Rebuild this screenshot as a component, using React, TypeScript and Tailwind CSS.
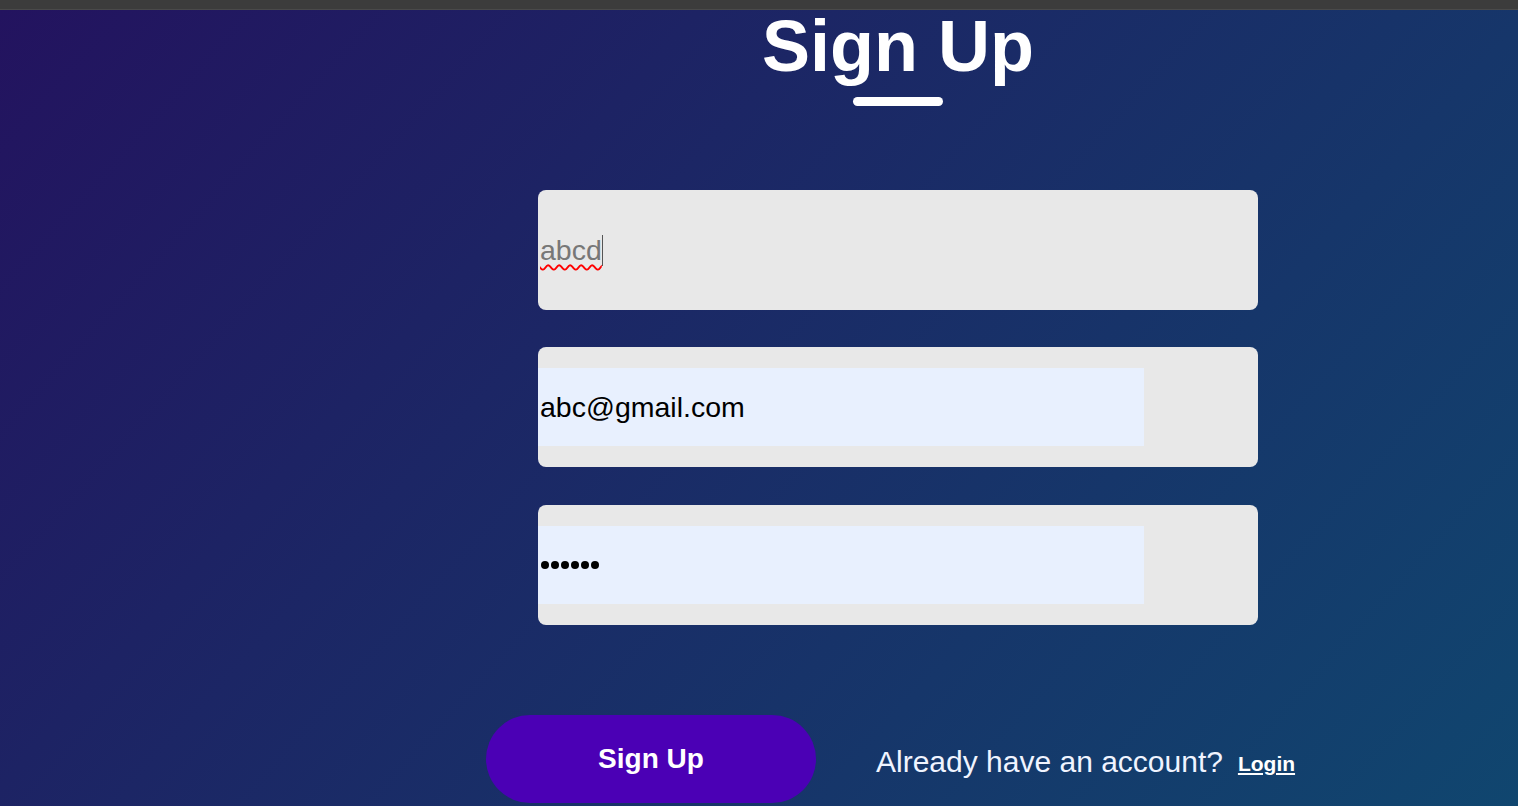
import React from 'react';

const font = { fontFamily: '"Liberation Sans", Arial, sans-serif' };

export default function App() {
  return (
    <div className="w-[1518px] h-[806px] overflow-hidden flex flex-col" style={font}>
      <div className="h-[10px] bg-[#3c3c3c] border-b border-[#4a4a4a] shrink-0" />
      <div className="flex-1 flex bg-linear-[132deg] from-[#23135f] to-[#10466f]">
        <div className="w-[278px] shrink-0" />
        <div className="flex-1 flex flex-col items-center">
          <h1 className="text-[72px] font-bold text-white leading-none mt-0">Sign Up</h1>
          <div className="w-[90px] h-[9px] bg-white rounded-full mt-[15px]" />

          <div className="flex flex-col mt-[84px]">
            <div className="w-[720px] h-[120px] bg-[#e8e8e8] rounded-lg flex items-center">
              <span className="text-[28.5px] text-[#777] leading-none pl-[2px] underline decoration-wavy decoration-[#f00] decoration-2 underline-offset-4">
                abcd
              </span>
              <span className="w-px h-[31px] bg-[#555]" />
            </div>
            <div className="w-[720px] h-[120px] mt-[37px] bg-[#e8e8e8] rounded-lg flex items-center">
              <div className="w-[606px] h-[78px] bg-[#e8f0fe] flex items-center pl-[2px] text-[28.5px] text-black">
                abc@gmail.com
              </div>
            </div>
            <div className="w-[720px] h-[120px] mt-[38px] bg-[#e8e8e8] rounded-lg flex items-center">
              <div className="w-[606px] h-[78px] bg-[#e8f0fe] flex items-center pl-[3px] gap-[2px]">
                {[0, 1, 2, 3, 4, 5].map((i) => (
                  <span key={i} className="w-[8px] h-[8px] rounded-full bg-black" />
                ))}
              </div>
            </div>
          </div>

          <div className="self-start flex items-center mt-[90px] ml-[208px]">
            <button className="w-[330px] h-[88px] rounded-full bg-[#4b00b5] text-white text-[28px] font-bold">
              Sign Up
            </button>
            <span className="ml-[60px] text-[30px] text-[#f0f4ff] mt-[4px]">Already have an account?</span>
            <a href="#" className="ml-[15px] text-[21px] font-bold text-white underline mt-[10px]">
              Login
            </a>
          </div>
        </div>
      </div>
    </div>
  );
}
